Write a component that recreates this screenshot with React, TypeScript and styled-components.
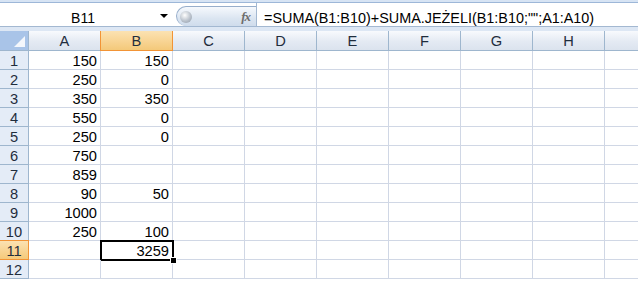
import { Fragment } from 'react';
import styled, { createGlobalStyle, css } from 'styled-components';

const GlobalStyle = createGlobalStyle`
  html, body {
    margin: 0;
    padding: 0;
    background: #ffffff;
    overflow: hidden;
  }
  body {
    font-family: "Liberation Sans", Arial, sans-serif;
  }
`;

const Window = styled.div`
  width: 638px;
  height: 281px;
  overflow: hidden;
  display: flex;
  flex-direction: column;
  background: #ffffff;
`;

const RibbonEdge = styled.div`
  height: 2px;
  flex-shrink: 0;
  background: #d7e4f4;
  border-bottom: 1px solid #9db7d8;
`;

const FormulaBar = styled.div`
  height: 23px;
  flex-shrink: 0;
  display: flex;
  align-items: stretch;
  background: #ffffff;
  border-bottom: 1px solid #a3b8d1;
`;

const NameBox = styled.div`
  width: 172px;
  display: flex;
  align-items: flex-end;
  font-size: 14px;
  color: #000;
`;

const NameText = styled.div`
  flex: 1;
  text-align: center;
  padding-left: 6px;
`;

const DropArrow = styled.div`
  width: 0;
  height: 0;
  margin: 0 4px 8px 0;
  border-left: 4px solid transparent;
  border-right: 4px solid transparent;
  border-top: 4px solid #000;
`;

const Pill = styled.div`
  width: 80px;
  margin-left: 4px;
  margin-top: 3px;
  display: flex;
  align-items: center;
  justify-content: space-between;
  box-sizing: border-box;
  border: 1px solid #97aecb;
  border-right: none;
  border-bottom: none;
  border-radius: 12px 0 0 12px;
  background: linear-gradient(#f6f9fd, #dbe5f1 60%, #cfdcec);
  padding: 0 6px 0 3px;
`;

const Knob = styled.div`
  width: 12px;
  height: 12px;
  border-radius: 50%;
  background: radial-gradient(circle at 40% 35%, #ffffff, #b9c1cb 55%, #8f99a6);
`;

const Fx = styled.span`
  font-family: "Liberation Serif", "Times New Roman", serif;
  font-style: italic;
  font-weight: bold;
  font-size: 13px;
  color: #6d6d6d;
  letter-spacing: -1px;
`;

const Separator = styled.div`
  width: 1px;
  background: #a3b8d1;
`;

const FormulaText = styled.div`
  flex: 1;
  display: flex;
  align-items: flex-end;
  padding-left: 7px;
  font-size: 14.4px;
  color: #000;
  white-space: nowrap;
`;

const Gap = styled.div`
  height: 4px;
  flex-shrink: 0;
  background: #dde7f4;
`;

const Sheet = styled.div`
  display: grid;
  grid-template-columns: 29px repeat(9, 72px);
  grid-auto-rows: 19px;
  grid-template-rows: 20px;
  font-size: 14.67px;
`;

const Corner = styled.div`
  box-sizing: border-box;
  border-right: 1px solid #9eb6ce;
  border-bottom: 1px solid #9eb6ce;
  background: #a9c4e8;
  display: flex;
  align-items: flex-end;
  justify-content: flex-end;
  padding: 0 3px 3px 0;
`;

const activeFill = css`
  background: linear-gradient(#fbe2b2, #f8d493 55%, #f4c97a);
  border-right-color: #f29436;
  border-bottom-color: #f29436;
`;

const ColHeader = styled.div<{ $active?: boolean }>`
  box-sizing: border-box;
  border-right: 1px solid #9eb6ce;
  border-bottom: 1px solid #9eb6ce;
  background: linear-gradient(#f8fafd, #e4eaf3 55%, #dbe3ee);
  text-align: center;
  padding-top: 2px;
  line-height: 16px;
  color: #1f2d3d;
  ${(p) =>
    p.$active &&
    css`
      ${activeFill}
      box-shadow: -1px 0 0 #f29436;
    `}
`;

const RowHeader = styled.div<{ $active?: boolean }>`
  box-sizing: border-box;
  border-right: 1px solid #9eb6ce;
  border-bottom: 1px solid #9eb6ce;
  background: #e4ecf7;
  text-align: center;
  padding-top: 3px;
  line-height: 15px;
  color: #1f2d3d;
  ${(p) =>
    p.$active &&
    css`
      ${activeFill}
      box-shadow: 0 -1px 0 #f29436;
    `}
`;

const Cell = styled.div<{ $selected?: boolean }>`
  box-sizing: border-box;
  position: relative;
  border-right: 1px solid #d0d7e5;
  border-bottom: 1px solid #d0d7e5;
  text-align: right;
  padding: 3px 3px 0 0;
  line-height: 15px;
  color: #000;
  ${(p) =>
    p.$selected &&
    css`
      &::after {
        content: '';
        position: absolute;
        left: -1px;
        top: -1px;
        right: -2px;
        bottom: -2px;
        border: 2px solid #000;
        pointer-events: none;
      }
    `}
`;

const FillHandle = styled.div`
  position: absolute;
  right: -5px;
  bottom: -5px;
  width: 5px;
  height: 5px;
  background: #000;
  border: 1px solid #fff;
  z-index: 2;
`;

const columns = ['A', 'B', 'C', 'D', 'E', 'F', 'G', 'H', 'I'];

const data: Record<string, string[]> = {
  A: ['150', '250', '350', '550', '250', '750', '859', '90', '1000', '250', '', ''],
  B: ['150', '0', '350', '0', '0', '', '', '50', '', '100', '3259', ''],
};

const activeCol = 'B';
const activeRow = 11;

export default function App() {
  const rows = Array.from({ length: 12 }, (_, i) => i + 1);

  return (
    <Window>
      <GlobalStyle />
      <RibbonEdge />
      <FormulaBar>
        <NameBox>
          <NameText>B11</NameText>
          <DropArrow />
        </NameBox>
        <Pill>
          <Knob />
          <Fx>fx</Fx>
        </Pill>
        <Separator />
        <FormulaText>=SUMA(B1:B10)+SUMA.JEŻELI(B1:B10;"";A1:A10)</FormulaText>
      </FormulaBar>
      <Gap />
      <Sheet>
        <Corner>
          <svg width="11" height="11" viewBox="0 0 11 11">
            <polygon points="11,0 11,11 0,11" fill="#f4f7fc" />
          </svg>
        </Corner>
        {columns.map((c) => (
          <ColHeader key={c} $active={c === activeCol}>
            {c === 'I' ? '' : c}
          </ColHeader>
        ))}
        {rows.map((r) => (
          <Fragment key={r}>
            <RowHeader $active={r === activeRow}>{r}</RowHeader>
            {columns.map((c) => {
              const selected = c === activeCol && r === activeRow;
              return (
                <Cell key={c} $selected={selected}>
                  {data[c]?.[r - 1] ?? ''}
                  {selected && <FillHandle />}
                </Cell>
              );
            })}
          </Fragment>
        ))}
      </Sheet>
    </Window>
  );
}
